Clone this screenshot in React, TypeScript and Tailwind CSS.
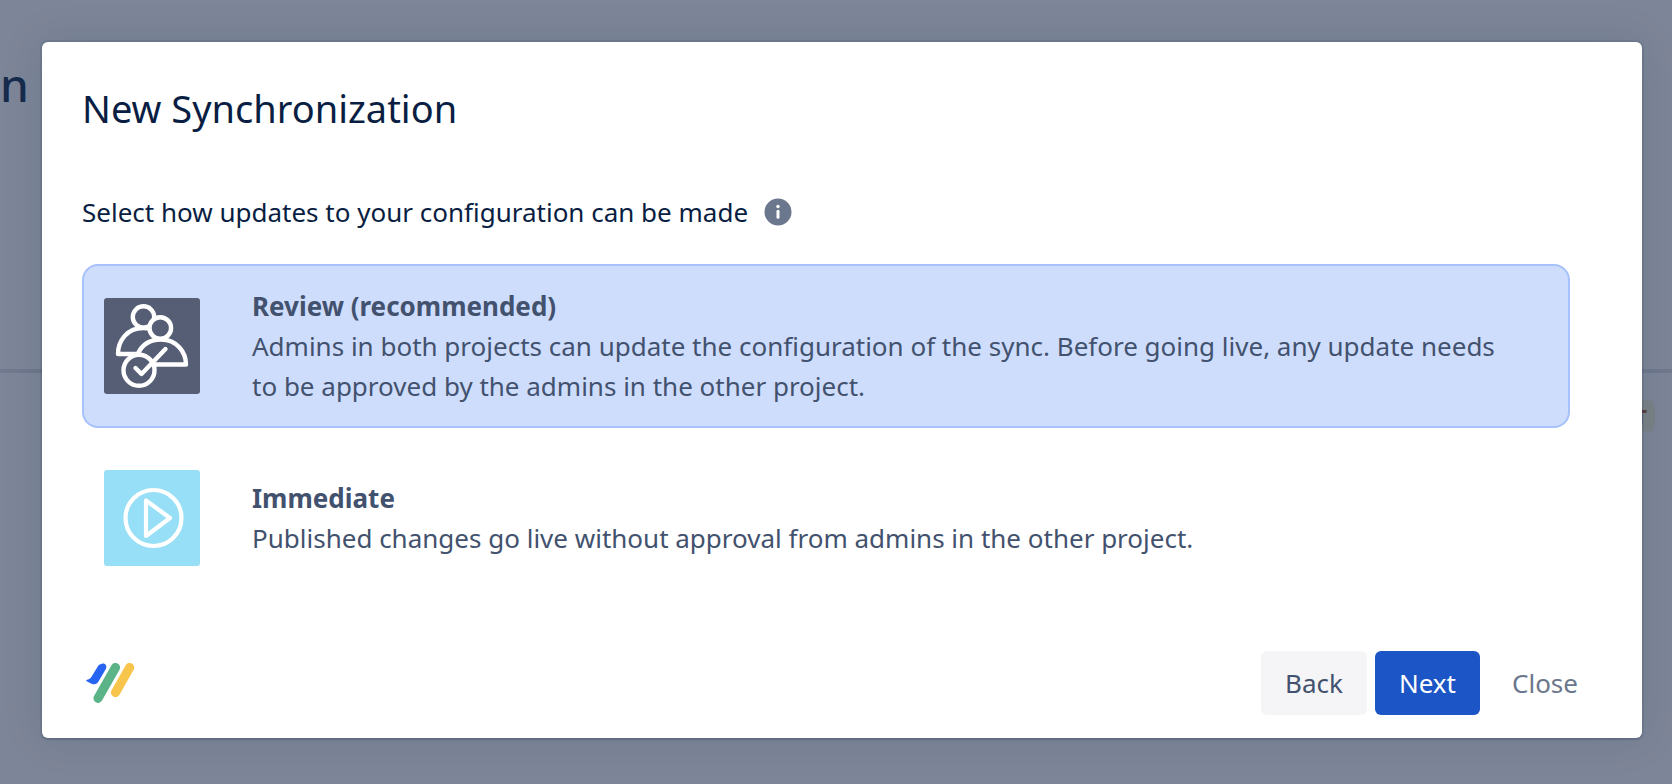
import { useState, type ReactNode } from "react";

const ReviewIcon = () => (
  <svg viewBox="0 0 96 96" className="size-24" fill="none" stroke="#fff" strokeWidth="4.4" strokeLinecap="round" strokeLinejoin="round" aria-hidden>
    <rect width="96" height="96" rx="3" fill="#565e76" stroke="none" />
    <circle cx="39.5" cy="19" r="10.7" />
    <path d="M36 56H14c0-13 9-26 25-26 3 0 6 .5 8 1" />
    <circle cx="56.3" cy="30" r="10.8" fill="#565e76" />
    <path d="M34 55.500C38 47 46 41.500 57 41.500c16 0 25 13 25 25H50z" fill="#565e76" stroke="none" />
    <path d="M34 55.500C38 47 46 41.500 57 41.500c16 0 25 13 25 25H50" />
    <circle cx="35" cy="72.300" r="15.500" fill="#565e76" />
    <path d="M31.500 70l6 6L61.500 51" />
  </svg>
);

const ImmediateIcon = () => (
  <svg viewBox="0 0 96 96" className="size-24" fill="none" stroke="#fff" strokeWidth="4.2" strokeLinejoin="round" aria-hidden>
    <rect width="96" height="96" rx="3" fill="#97dff6" stroke="none" />
    <circle cx="49.500" cy="48" r="28" />
    <path d="M42 30.500v35.500L66 48z" />
  </svg>
);

const Logo = () => (
  <svg viewBox="0 0 52 44" className="h-11 w-[52px]" fill="none" strokeLinecap="round" role="img" aria-label="Logo">
    <path d="M15.500 3.200c3.800-2.200 7.500 1 5.200 5L13.500 20.500c-1.700 3-4.500 3.500-7.500 1.900L1.800 20.300c-1-.6-.8-1.500.3-1.600 2.500-.5 3.700-1.700 4.700-3.500l6.300-10.300c.7-1 1.400-1.400 2.400-1.700z" fill="#2864f2" />
    <path d="M30.500 6.500L13 37.300" stroke="#5bb487" strokeWidth="9.200" />
    <path d="M44.700 6.500L30.500 31.500" stroke="#f7c54b" strokeWidth="9.200" />
  </svg>
);

const InfoIcon = () => (
  <svg viewBox="0 0 28 28" className="size-7" aria-hidden>
    <circle cx="14" cy="14" r="13.500" fill="#6b778c" />
    <circle cx="14" cy="8.500" r="1.700" fill="#fff" />
    <rect x="12.500" y="11.700" width="3" height="9" rx="1.500" fill="#fff" />
  </svg>
);

type Option = { id: string; icon: ReactNode; title: string; desc: string };

const options: Option[] = [
  {
    id: "review",
    icon: <ReviewIcon />,
    title: "Review (recommended)",
    desc: "Admins in both projects can update the configuration of the sync. Before going live, any update needs to be approved by the admins in the other project.",
  },
  {
    id: "immediate",
    icon: <ImmediateIcon />,
    title: "Immediate",
    desc: "Published changes go live without approval from admins in the other project.",
  },
];

function PageBehind() {
  return (
    <div className="absolute inset-0 overflow-hidden bg-[#7d8698]" aria-hidden>
      <div className="h-[373px] border-b-4 border-[#70798e] pt-[52px]">
        <span className="text-[46px] leading-[64px] font-medium text-[#172b4d]">n</span>
      </div>
      <div className="flex justify-end pt-[27px] pr-[17px]">
        <span className="rounded-lg bg-[#7b8287] px-2 text-[22px] leading-8 font-bold text-[#553c3c]">T</span>
      </div>
    </div>
  );
}

export default function App() {
  const [selected, setSelected] = useState("review");

  return (
    <div className="relative min-h-screen font-['Noto_Sans','Segoe_UI',sans-serif]">
      <PageBehind />
      <div className="relative pt-[42px] pr-[30px] pb-[46px] pl-[42px]">
        <div
          role="dialog"
          aria-labelledby="dialog-title"
          className="rounded-md bg-white px-10 pt-[38px] pb-[23px] shadow-[0_0_0_2px_rgba(9,30,66,0.08),0_2px_2px_rgba(9,30,66,0.12),0_0_40px_rgba(9,50,66,0.14)]"
        >
          <h1 id="dialog-title" className="text-[38px] leading-[56px] text-[#091e42]">New Synchronization</h1>

          <div role="radiogroup" aria-labelledby="mode-question" className="mt-14 mr-8">
            <div className="flex items-center gap-4 text-[#091e42]">
              <p id="mode-question" className="text-[26px] leading-10">Select how updates to your configuration can be made</p>
              <button type="button" aria-label="More information"><InfoIcon /></button>
            </div>
            <div className="mt-8 flex flex-col gap-5">
              {options.map((o) => (
                <label
                  key={o.id}
                  className={`flex cursor-pointer items-center gap-[52px] rounded-2xl border-2 p-5 text-[#42526e] ${
                    selected === o.id ? "border-[#a6c1fb] bg-[#cfddfd]" : "border-transparent"
                  }`}
                >
                  <input
                    type="radio"
                    name="mode"
                    value={o.id}
                    checked={selected === o.id}
                    onChange={() => setSelected(o.id)}
                    className="sr-only"
                  />
                  <span className="shrink-0">{o.icon}</span>
                  <span className="pr-8 text-[26px] leading-10">
                    <strong className="block font-bold">{o.title}</strong>
                    <span className="block">{o.desc}</span>
                  </span>
                </label>
              ))}
            </div>
          </div>

          <div className="mt-[63px] flex items-center justify-between pl-[3px]">
            <Logo />
            <div className="flex gap-2 text-[26px] leading-10">
              <button type="button" className="rounded-md bg-[#f5f5f8] px-6 py-3 text-[#42526e]">Back</button>
              <button type="button" className="rounded-md bg-[#1c55c6] px-6 py-3 text-white">Next</button>
              <button type="button" className="rounded-md px-6 py-3 text-[#6b778c]">Close</button>
            </div>
          </div>
        </div>
      </div>
    </div>
  );
}
